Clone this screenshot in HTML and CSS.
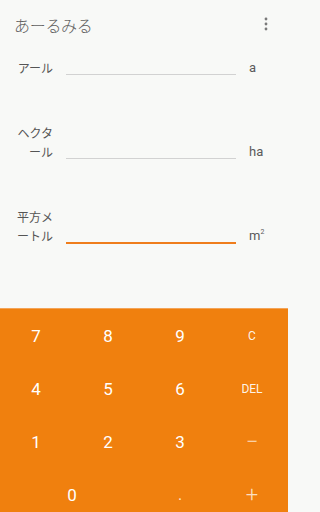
FILE: index.html
```html
<!DOCTYPE html>
<html lang="ja">
<head>
<meta charset="utf-8">
<link rel="stylesheet" href="styles.css">
</head>
<body>
<div class="app">
  <header class="bar">
    <span class="title">あーるみる</span>
    <svg class="menu" width="4" height="14" viewBox="0 0 4 14"><circle cx="2" cy="2" r="1.4"/><circle cx="2" cy="7" r="1.4"/><circle cx="2" cy="12" r="1.4"/></svg>
  </header>
  <main class="form">
    <div class="row">
      <div class="label">アール</div>
      <div class="field"></div>
      <div class="unit">a</div>
    </div>
    <div class="row">
      <div class="label">ヘクタ<br>ール</div>
      <div class="field"></div>
      <div class="unit">ha</div>
    </div>
    <div class="row">
      <div class="label">平方メ<br>ートル</div>
      <div class="field active"></div>
      <div class="unit">m<sup>2</sup></div>
    </div>
  </main>
  <section class="pad">
    <div class="key">7</div><div class="key">8</div><div class="key">9</div><div class="key op small">C</div>
    <div class="key">4</div><div class="key">5</div><div class="key">6</div><div class="key op small">DEL</div>
    <div class="key">1</div><div class="key">2</div><div class="key">3</div><div class="key op sign">−</div>
    <div class="key wide">0</div><div class="key op">.</div><div class="key op sign">+</div>
  </section>
</div>
</body>
</html>
```
FILE: styles.css
```css
html, body {
  margin: 0;
  padding: 0;
}
body {
  background: #f8f9f7;
  font-family: "Noto Sans CJK JP", Roboto, sans-serif;
}
.app {
  width: 288px;
  height: 512px;
  display: flex;
  flex-direction: column;
  overflow: hidden;
}
.bar {
  flex: 0 0 48px;
  display: flex;
  align-items: center;
  justify-content: space-between;
  padding: 0 20px 0 14px;
}
.title {
  font-size: 16px;
  font-weight: 300;
  color: #606060;
  letter-spacing: -0.3px;
  position: relative;
  top: 1px;
}
.menu {
  fill: #7a7a7a;
}
.form {
  flex: 0 0 260px;
  box-sizing: border-box;
  padding-top: 10px;
  display: flex;
  flex-direction: column;
  gap: 46px;
}
.row {
  display: flex;
  align-items: flex-end;
}
.label {
  width: 38px;
  margin-left: 15px;
  text-align: right;
  font-size: 12px;
  font-weight: 400;
  line-height: 19px;
  color: #555;
}
.field {
  width: 170px;
  margin-left: 13px;
  margin-bottom: 2px;
  border-bottom: 1px solid #d2d2d2;
}
.field.active {
  border-bottom: 2px solid #ef7d1c;
  margin-bottom: 1px;
}
.unit {
  margin-left: 13px;
  font-family: Roboto, sans-serif;
  font-size: 13px;
  line-height: 19px;
  color: #5a5a5a;
}
.unit sup {
  font-size: 7px;
  vertical-align: 6px;
  line-height: 0;
}
.pad {
  flex: 0 0 auto;
  background: #f0800e;
  border-top: 1px solid #f4a457;
  display: grid;
  grid-template-columns: repeat(4, 72px);
  grid-auto-rows: 53px;
}
.key {
  display: flex;
  align-items: center;
  justify-content: center;
  font-family: Roboto, sans-serif;
  font-size: 17px;
  color: #fff;
}
.key.wide {
  grid-column: span 2;
}
.key.op {
  color: rgba(255, 255, 255, 0.8);
  font-size: 16px;
}
.key.small {
  font-size: 12px;
  color: rgba(255, 255, 255, 0.92);
}
.key.sign {
  font-size: 22px;
  font-weight: 300;
  color: rgba(255, 255, 255, 0.75);
}
```
